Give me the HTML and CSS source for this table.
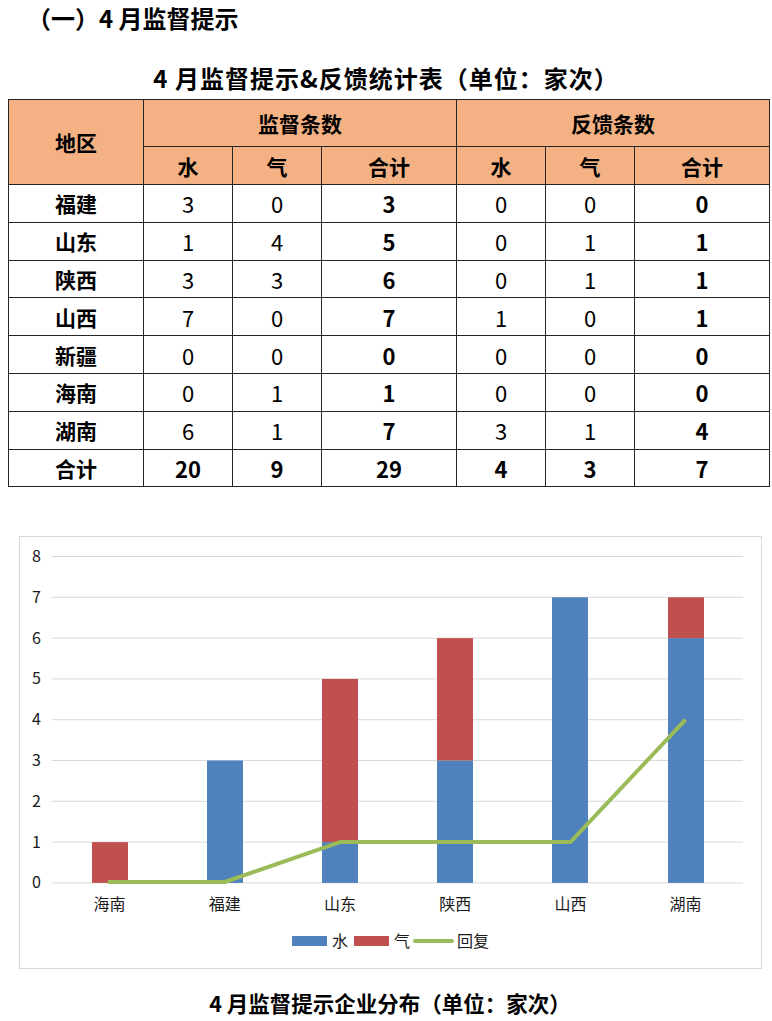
FILE: index.html
```html
<!DOCTYPE html>
<html lang="zh-CN">
<head>
<meta charset="utf-8">
<title>4月监督提示</title>
<link rel="stylesheet" href="styles.css">
</head>
<body>
<div class="page">
  <h1 class="section-title">（一）4 月监督提示</h1>
  <h2 class="table-caption">4 月监督提示&amp;反馈统计表（单位：家次）</h2>
  <table class="stats">
    <colgroup>
      <col class="c-wide"><col class="c-narrow"><col class="c-narrow"><col class="c-wide"><col class="c-narrow"><col class="c-narrow"><col class="c-wide">
    </colgroup>
    <thead>
      <tr class="h1">
        <th rowspan="2">地区</th>
        <th colspan="3">监督条数</th>
        <th colspan="3">反馈条数</th>
      </tr>
      <tr class="h2">
        <th>水</th><th>气</th><th>合计</th>
        <th>水</th><th>气</th><th>合计</th>
      </tr>
    </thead>
    <tbody>
      <tr><th>福建</th><td>3</td><td>0</td><td class="b">3</td><td>0</td><td>0</td><td class="b">0</td></tr>
      <tr><th>山东</th><td>1</td><td>4</td><td class="b">5</td><td>0</td><td>1</td><td class="b">1</td></tr>
      <tr><th>陕西</th><td>3</td><td>3</td><td class="b">6</td><td>0</td><td>1</td><td class="b">1</td></tr>
      <tr><th>山西</th><td>7</td><td>0</td><td class="b">7</td><td>1</td><td>0</td><td class="b">1</td></tr>
      <tr><th>新疆</th><td>0</td><td>0</td><td class="b">0</td><td>0</td><td>0</td><td class="b">0</td></tr>
      <tr><th>海南</th><td>0</td><td>1</td><td class="b">1</td><td>0</td><td>0</td><td class="b">0</td></tr>
      <tr><th>湖南</th><td>6</td><td>1</td><td class="b">7</td><td>3</td><td>1</td><td class="b">4</td></tr>
      <tr class="total"><th>合计</th><td class="b">20</td><td class="b">9</td><td class="b">29</td><td class="b">4</td><td class="b">3</td><td class="b">7</td></tr>
    </tbody>
  </table>

  <div class="chart">
    <svg class="chart-svg" width="741" height="431" viewBox="0 0 741 431" xmlns="http://www.w3.org/2000/svg">
      <g class="grid" stroke="#d9d9d9" stroke-width="1">
        <line x1="32" y1="19.5" x2="723" y2="19.5"/>
        <line x1="32" y1="60.3" x2="723" y2="60.3"/>
        <line x1="32" y1="101.1" x2="723" y2="101.1"/>
        <line x1="32" y1="141.9" x2="723" y2="141.9"/>
        <line x1="32" y1="182.7" x2="723" y2="182.7"/>
        <line x1="32" y1="223.5" x2="723" y2="223.5"/>
        <line x1="32" y1="264.3" x2="723" y2="264.3"/>
        <line x1="32" y1="305.1" x2="723" y2="305.1"/>
        <line x1="32" y1="345.9" x2="723" y2="345.9"/>
      </g>
      <g class="ylabels" font-size="16" fill="#1a1a1a" text-anchor="end">
        <text x="21" y="25">8</text>
        <text x="21" y="65.8">7</text>
        <text x="21" y="106.6">6</text>
        <text x="21" y="147.4">5</text>
        <text x="21" y="188.2">4</text>
        <text x="21" y="229">3</text>
        <text x="21" y="269.8">2</text>
        <text x="21" y="310.6">1</text>
        <text x="21" y="351.4">0</text>
      </g>
      <g class="bars">
        <rect x="72" y="305.1" width="36" height="40.8" fill="#c0504d"/>
        <rect x="187" y="223.5" width="36" height="122.4" fill="#4f81bd"/>
        <rect x="302" y="305.1" width="36" height="40.8" fill="#4f81bd"/>
        <rect x="302" y="141.9" width="36" height="163.2" fill="#c0504d"/>
        <rect x="417" y="223.5" width="36" height="122.4" fill="#4f81bd"/>
        <rect x="417" y="101.1" width="36" height="122.4" fill="#c0504d"/>
        <rect x="532" y="60.3" width="36" height="285.6" fill="#4f81bd"/>
        <rect x="648" y="101.1" width="36" height="244.8" fill="#4f81bd"/>
        <rect x="648" y="60.3" width="36" height="40.8" fill="#c0504d"/>
      </g>
      <polyline points="88,345 204.8,345 320,305.1 435.2,305.1 550.4,305.1 665.6,182.7" fill="none" stroke="#9bbb59" stroke-width="4" stroke-linejoin="round"/>
      <g class="xlabels" font-size="16" fill="#1a1a1a" text-anchor="middle">
        <text x="89.6" y="373">海南</text>
        <text x="204.8" y="373">福建</text>
        <text x="320" y="373">山东</text>
        <text x="435.2" y="373">陕西</text>
        <text x="550.4" y="373">山西</text>
        <text x="665.6" y="373">湖南</text>
      </g>
      <g class="legend" font-size="16" fill="#1a1a1a">
        <rect x="272" y="399" width="35" height="10" fill="#4f81bd"/>
        <text x="312" y="410">水</text>
        <rect x="334" y="399" width="35" height="10" fill="#c0504d"/>
        <text x="374" y="410">气</text>
        <line x1="395" y1="404" x2="432" y2="404" stroke="#9bbb59" stroke-width="4" stroke-linecap="round"/>
        <text x="437" y="410">回复</text>
      </g>
    </svg>
  </div>

  <h2 class="chart-caption">4 月监督提示企业分布（单位：家次）</h2>
</div>
</body>
</html>
```

FILE: styles.css
```css
html, body {
  margin: 0;
  padding: 0;
  background: #ffffff;
}

body {
  font-family: "Noto Sans CJK SC", "Noto Sans", sans-serif;
  color: #000000;
}

.page {
  width: 772px;
  display: flex;
  flex-direction: column;
}

.section-title {
  margin: 0;
  padding: 3px 0 0 27px;
  height: 33px;
  font-size: 24px;
  font-weight: 700;
  line-height: 30px;
}

.table-caption {
  margin: 27px 0 0 0;
  height: 36px;
  text-align: center;
  font-size: 24px;
  font-weight: 700;
  line-height: 30px;
  letter-spacing: 1px;
  padding-right: 0;
}

.stats {
  margin: 0 0 0 8px;
  width: 762px;
  border-collapse: collapse;
  table-layout: fixed;
}

.c-wide { width: 135px; }
.c-narrow { width: 89px; }

.stats th,
.stats td {
  border: 1px solid #262626;
  padding: 0;
  text-align: center;
  vertical-align: middle;
}

.stats thead th {
  background: #f4b183;
  font-size: 21px;
  font-weight: 700;
}

.stats tr.h1 { height: 47px; }
.stats tr.h2 { height: 38px; }

.stats tbody tr { height: 37.8px; }

.stats tbody th {
  font-size: 21px;
  font-weight: 700;
}

.stats td {
  font-size: 22px;
  font-weight: 400;
}

.stats td.b {
  font-weight: 700;
}

.chart {
  margin: 49px 0 0 19px;
  width: 741px;
  height: 431px;
  border: 1px solid #d9d9d9;
}

.chart-svg {
  display: block;
  font-family: "Noto Sans CJK SC", "Noto Sans", sans-serif;
}

.chart-caption {
  margin: 18px 0 0 0;
  text-align: center;
  font-size: 21.5px;
  font-weight: 700;
  line-height: 32px;
  padding-left: 8px;
}
```
